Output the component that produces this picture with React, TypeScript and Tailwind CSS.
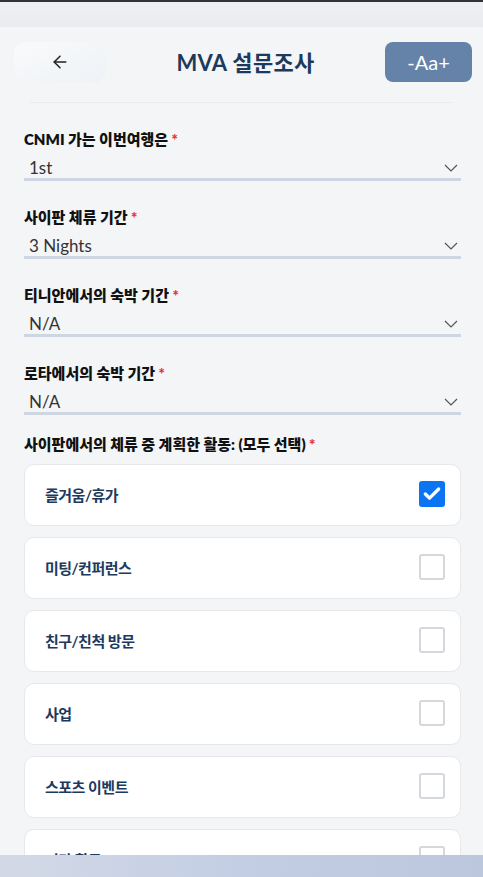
import { ArrowLeft, Check } from 'lucide-react'

const font = { fontFamily: '"Lato", "Noto Sans CJK KR", sans-serif' }

const questions = [
  { label: 'CNMI 가는 이번여행은', value: '1st' },
  { label: '사이판 체류 기간', value: '3 Nights' },
  { label: '티니안에서의 숙박 기간', value: 'N/A' },
  { label: '로타에서의 숙박 기간', value: 'N/A' },
]

const activities = [
  { label: '즐거움/휴가', checked: true },
  { label: '미팅/컨퍼런스', checked: false },
  { label: '친구/친척 방문', checked: false },
  { label: '사업', checked: false },
  { label: '스포츠 이벤트', checked: false },
  { label: '기타 활동', checked: false },
]

function Chevron(): React.JSX.Element {
  return (
    <svg width="14" height="8" viewBox="0 0 14 8" className="mt-[4px]">
      <polyline points="1,1 7,7 13,1" fill="none" stroke="#555" strokeWidth="1.2" />
    </svg>
  )
}

function SelectField({ label, value }: { label: string; value: string }): React.JSX.Element {
  return (
    <div className="flex flex-col">
      <label className="text-[15px] leading-[22px] font-extrabold text-[#111]">
        {label} <span className="text-[#e53935]">*</span>
      </label>
      <div className="mt-[4px] flex h-[27px] items-center justify-between border-b-[3px] border-[#cdd6e2] pl-[5px] pr-[3px]">
        <span className="pt-[3px] text-[17px] text-[#333]">{value}</span>
        <Chevron />
      </div>
    </div>
  )
}

function ActivityCard({ label, checked }: { label: string; checked: boolean }): React.JSX.Element {
  return (
    <div className="flex h-[62px] shrink-0 items-center justify-between rounded-[10px] border border-[#e6e8ec] bg-white pl-[20px] pr-[15px]">
      <span className="text-[15px] font-bold tracking-[-0.5px] text-[#1d3a5e]">{label}</span>
      {checked ? (
        <div className="mb-[3px] flex h-[26px] w-[26px] items-center justify-center rounded-[3px] bg-[#0b74f2]">
          <Check size={20} strokeWidth={4} className="text-white" />
        </div>
      ) : (
        <div className="mb-[3px] h-[26px] w-[26px] rounded-[3px] border-2 border-[#d4d7dc] bg-white" />
      )}
    </div>
  )
}

export default function App(): React.JSX.Element {
  return (
    <div className="flex h-[877px] w-[483px] flex-col overflow-hidden bg-[#f4f5f7]" style={font}>
      <div className="h-[27px] shrink-0 border-t-2 border-[#333] bg-gradient-to-b from-[#eef0f3] to-[#e9ebee]" />

      <div className="flex-1 overflow-hidden">
        <header className="flex items-center justify-between pl-[14px] pr-[11px] pt-[15px]">
          <button className="flex h-[40px] w-[92px] items-center justify-center rounded-xl bg-gradient-to-br from-[#f9fafb] to-[#eef2f6]">
            <ArrowLeft size={20} strokeWidth={1.8} className="text-[#222]" />
          </button>
          <h1 className="text-[22px] font-bold tracking-[0.3px] text-[#1b3a5c]">MVA 설문조사</h1>
          <button className="flex h-[40px] w-[87px] items-center justify-center rounded-lg bg-[#6583a9] text-[20px] text-white">
            -Aa+
          </button>
        </header>

        <div className="mx-[30px] mt-[20px] h-px bg-[#e9ebee]" />

        <div className="flex flex-col gap-[25px] pl-[24px] pr-[22px] pt-[25px]">
          {questions.map((q) => (
            <SelectField key={q.label} label={q.label} value={q.value} />
          ))}
        </div>

        <div className="pl-[24px] pr-[22px] pt-[18px]">
          <p className="text-[15px] leading-[22px] font-extrabold text-[#111]">
            사이판에서의 체류 중 계획한 활동: (모두 선택) <span className="text-[#e53935]">*</span>
          </p>
          <div className="mt-[9px] flex flex-col gap-[11px]">
            {activities.map((a) => (
              <ActivityCard key={a.label} label={a.label} checked={a.checked} />
            ))}
          </div>
        </div>
      </div>

      <div className="h-[22px] shrink-0 bg-gradient-to-r from-[#d3d9e6] via-[#c3cee4] to-[#bcc6dc]" />
    </div>
  )
}
